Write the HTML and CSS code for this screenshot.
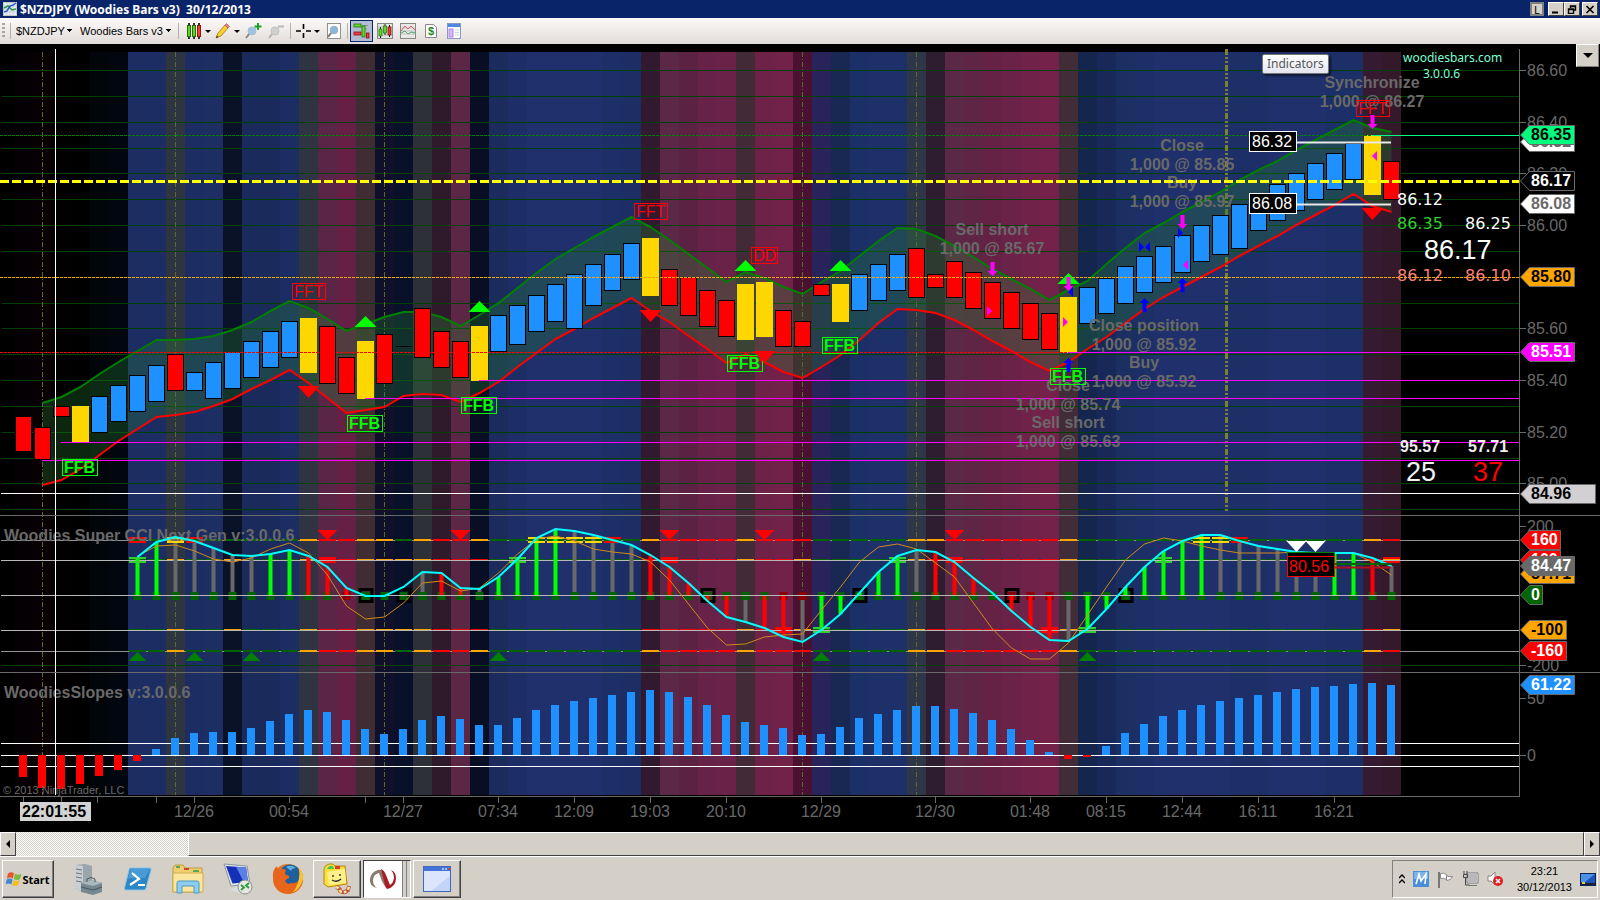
FILE: index.html
```html
<!DOCTYPE html>
<html lang="en">
<head>
    <meta charset="utf-8">
    <title>$NZDJPY (Woodies Bars v3) 30/12/2013</title>
    <link rel="stylesheet" href="styles.css">
</head>
<body>
    <header class="titlebar">
        <svg class="app-icon" width="14" height="14" viewBox="0 0 14 14">
            <rect x="0.5" y="0.5" width="13" height="13" fill="#e8eef8" stroke="#c8c8c8"/>
            <path d="M1 4h12M1 7h12M1 10h12M4 1v12M7 1v12M10 1v12" stroke="#b8c4d8" stroke-width="0.6"/>
            <path d="M1 6l4-2 4 4 4-1" fill="none" stroke="#2a9a3a" stroke-width="1.5"/>
            <path d="M1 10l3-1 3-5 3-1 3-2" fill="none" stroke="#2858c8" stroke-width="1.5"/>
        </svg>
        <h1>$NZDJPY (Woodies Bars v3)&nbsp; 30/12/2013</h1>
        <div class="window-buttons">
            <button class="link-btn" aria-label="Link">L</button>
            <button aria-label="Minimize"><svg width="10" height="9" viewBox="0 0 10 9"><path d="M1 7.5h6" stroke="#000" stroke-width="2"/></svg></button>
            <button aria-label="Restore"><svg width="10" height="9" viewBox="0 0 10 9"><path d="M3.5 3V1h5v4h-2M3.5 1.500h5M1.500 4h5v4.500h-5zM1.500 4.500h5" fill="none" stroke="#000" stroke-width="1.4"/></svg></button>
            <button class="close-btn" aria-label="Close"><svg width="10" height="9" viewBox="0 0 10 9"><path d="M1.500 1l7 7M8.500 1l-7 7" stroke="#000" stroke-width="1.7"/></svg></button>
        </div>
    </header>

    <nav class="toolbar">
        <span class="grip"></span>
        <span class="sep"></span>
        <select class="pick pick-symbol" aria-label="Instrument"><option>$NZDJPY</option></select>
        <select class="pick pick-period" aria-label="Period"><option>Woodies Bars v3</option></select>
        <span class="sep"></span>
        <button class="tool drop" aria-label="Chart style">
            <svg width="16" height="16" viewBox="0 0 16 16">
                <path d="M3 0v16M8 0v16M13 0v16" stroke="#333" stroke-width="2"/>
                <rect x="1.5" y="2.5" width="3" height="11" fill="#5fd820" stroke="#2a6a10"/>
                <rect x="6.5" y="2.5" width="3" height="11" fill="#5fd820" stroke="#2a6a10"/>
                <rect x="11.5" y="2.5" width="3" height="11" fill="#f04030" stroke="#8a1a10"/>
            </svg>
        </button>
        <button class="tool drop" aria-label="Drawing tools">
            <svg width="16" height="16" viewBox="0 0 16 16">
                <path d="M1 15l2-5 7-8 3 3-7 8z" fill="#f8d030" stroke="#a07810" stroke-width="0.8"/>
                <path d="M10 2l1.500-1.500 3 3L13 5z" fill="#f08090" stroke="#b05060" stroke-width="0.6"/>
                <path d="M1 15l1-2.500L3.500 14z" fill="#333"/>
            </svg>
        </button>
        <button class="tool" aria-label="Zoom in">
            <svg width="17" height="16" viewBox="0 0 17 16">
                <circle cx="7" cy="8" r="4" fill="#9cc4e8" stroke="#b0bcc8"/>
                <path d="M4 11l-3 4" stroke="#8a8a8a" stroke-width="2"/>
                <path d="M13 0v7M9.500 3.500h7" stroke="#18a028" stroke-width="2"/>
            </svg>
        </button>
        <button class="tool" aria-label="Zoom out" disabled>
            <svg width="17" height="16" viewBox="0 0 17 16">
                <circle cx="7" cy="8" r="4" fill="#d0d0d0" stroke="#c0c0c0"/>
                <path d="M4 11l-3 4" stroke="#b4b4b4" stroke-width="2"/>
                <path d="M10 3.500h6" stroke="#b8b8b8" stroke-width="2"/>
            </svg>
        </button>
        <span class="sep"></span>
        <button class="tool drop" aria-label="Cross hair">
            <svg width="15" height="16" viewBox="0 0 15 16"><path d="M7.500 1v5M7.500 10v5M0 8h5M10 8h5" stroke="#000" stroke-width="1.6"/></svg>
        </button>
        <button class="tool" aria-label="Data box">
            <svg width="16" height="16" viewBox="0 0 16 16">
                <rect x="1.5" y="0.5" width="13" height="15" fill="#fff" stroke="#909090"/>
                <circle cx="8" cy="7" r="3.800" fill="#88b8e0" stroke="#a0acb8"/>
                <path d="M5 10l-3 4" stroke="#787878" stroke-width="2"/>
            </svg>
        </button>
        <span class="sep"></span>
        <button class="tool active" aria-label="Chart trader">
            <svg width="17" height="17" viewBox="0 0 17 17">
                <rect x="1" y="1" width="7" height="3" fill="#5fe020" stroke="#207010" stroke-width="0.8"/>
                <rect x="1" y="9" width="7" height="3" fill="#f04040" stroke="#901010" stroke-width="0.8"/>
                <path d="M9 2.500h6M9 6h5M9 10.500h3" stroke="#8890a0"/>
                <rect x="9" y="3" width="3" height="11" fill="#5fe020" stroke="#207010" stroke-width="0.8"/>
                <rect x="13.5" y="10" width="2.5" height="5" fill="#f04040" stroke="#901010" stroke-width="0.8"/>
            </svg>
        </button>
        <button class="tool" aria-label="Data series">
            <svg width="16" height="16" viewBox="0 0 16 16">
                <rect x="0.5" y="0.5" width="15" height="15" fill="#e4e4e4" stroke="#888"/>
                <path d="M1 4h14M1 8h14M1 12h14" stroke="#bbb"/>
                <path d="M3.500 4v11M8 1v11M12.500 2v12" stroke="#222"/>
                <rect x="2" y="6" width="3" height="7" fill="#5fd820" stroke="#207010" stroke-width="0.7"/>
                <rect x="6.5" y="3" width="3" height="7" fill="#5fd820" stroke="#207010" stroke-width="0.7"/>
                <rect x="11" y="4" width="3" height="8" fill="#e04030" stroke="#801010" stroke-width="0.7"/>
            </svg>
        </button>
        <button class="tool" aria-label="Indicators">
            <svg width="16" height="16" viewBox="0 0 16 16">
                <rect x="0.5" y="0.5" width="15" height="15" fill="#e8e8e8" stroke="#888"/>
                <path d="M1 5h14M1 8h14M1 11h14" stroke="#c4c4c4"/>
                <path d="M1 8l4-5 3 3 3-3 4 4" fill="none" stroke="#d86060"/>
                <path d="M1 10l4-2 3 3 3-2 4 1" fill="none" stroke="#50a870"/>
            </svg>
        </button>
        <button class="tool" aria-label="Strategies">
            <svg width="16" height="16" viewBox="0 0 16 16">
                <path d="M2.500 1.500h8l3 3v10h-11z" fill="#fff" stroke="#888"/>
                <text x="5" y="12" class="dollar">$</text>
            </svg>
        </button>
        <button class="tool" aria-label="Properties">
            <svg width="14" height="16" viewBox="0 0 14 16">
                <rect x="0.5" y="0.5" width="13" height="15" fill="#fff" stroke="#8898c0"/>
                <rect x="1" y="1" width="12" height="3" fill="#5088e0"/>
                <rect x="2" y="6" width="4" height="8" fill="#d8b8f8" stroke="#a070e0" stroke-width="0.8"/>
                <path d="M8 7h4M8 9.500h4M8 12h4" stroke="#c8d4e8"/>
            </svg>
        </button>
    </nav>

    <main class="chart">
        <svg id="chart" viewBox="0 44 1600 788" preserveAspectRatio="xMinYMin meet" role="img" aria-label="$NZDJPY chart"></svg>
        <span class="tooltip">Indicators</span>
        <button class="panel-toggle" aria-label="Show panel"><svg width="10" height="5" viewBox="0 0 10 5"><path d="M0 0h10L5 5z"/></svg></button>
    </main>

    <div class="scrollbar">
        <button aria-label="Scroll left"><svg width="4" height="8" viewBox="0 0 4 8"><path d="M4 0v8L0 4z"/></svg></button>
        <div class="track"><div class="thumb"></div></div>
        <button aria-label="Scroll right"><svg width="4" height="8" viewBox="0 0 4 8"><path d="M0 0v8l4-4z"/></svg></button>
    </div>

    <footer class="taskbar">
        <button class="start">
            <svg width="16" height="16" viewBox="0 0 16 16">
                <path d="M2 2.500c2-1.500 4-1.500 6-.2L6.800 7.500c-2-1.300-4-1.200-6 .2z" fill="#e8552c"/>
                <path d="M9 2.800c2 1.200 4 1.200 6.500 0L14 8c-2 1.200-4 1.200-6.200 0z" fill="#7db93a"/>
                <path d="M.6 8.700c2-1.400 4-1.500 6-.2L5.400 13.500c-2-1.300-4-1.200-6 .2z" fill="#3f86d8"/>
                <path d="M7.500 9c2 1.300 4 1.200 6.200 0l-1.300 5c-2 1.200-4 1.200-6.200 0z" fill="#f6bd22"/>
            </svg>
            Start
        </button>
        <div class="launch">
            <button aria-label="Server Manager">
                <svg width="30" height="32" viewBox="0 0 30 32">
                    <path d="M2 2l10-1 7 2v23l-9 3-8-4z" fill="#9aa6ac"/>
                    <path d="M2 2l8 1v26l-8-4z" fill="#c8d0d4"/>
                    <path d="M3 6l6 1M3 10l6 1M3 14l6 1M3 18l6 1" stroke="#6a767c"/>
                    <path d="M8 20l10-3 11 3v9l-9 3-12-3z" fill="#768790"/>
                    <path d="M8 20l10-3 11 3-9 3z" fill="#a8b8c0"/>
                    <path d="M14 19v-3q4-3 8 0v3M8 24l12 3 9-3" fill="none" stroke="#48565e"/>
                </svg>
            </button>
            <button aria-label="PowerShell">
                <svg width="28" height="24" viewBox="0 0 28 24">
                    <path d="M6 1h20q1.500 0 1 2l-5 18q-.5 2-2 2H2q-2 0-1.500-2L5 3q.4-2 1-2z" fill="#2f86c4" stroke="#8cc4e8"/>
                    <path d="M7 2h19l-5 9H4z" fill="#5aaae0" opacity="0.6"/>
                    <path d="M8 6l7 6-9 6M14 18h7" fill="none" stroke="#fff" stroke-width="2.2"/>
                </svg>
            </button>
            <button aria-label="Explorer">
                <svg width="32" height="30" viewBox="0 0 32 30">
                    <path d="M1 4l2-3h8l2 3h17v24H1z" fill="#f0cf70" stroke="#c09838"/>
                    <path d="M4 3h4M21 7h6" stroke="#58a858" stroke-width="2"/>
                    <path d="M12 5h5" stroke="#d04030" stroke-width="2"/>
                    <path d="M1 9h30v19H1z" fill="#fae69c" stroke="#d0ac50"/>
                    <path d="M5 29V19q0-2 2-2h18q2 0 2 2v10h-5v-7H10v7z" fill="#8ccdf0" stroke="#4a98c8"/>
                </svg>
            </button>
            <button aria-label="Remote Desktop">
                <svg width="32" height="32" viewBox="0 0 32 32">
                    <path d="M2 1l23 2 3 18-19 2z" fill="#dfe4ea" stroke="#8c949c"/>
                    <path d="M4 3l20 1.500 2 14.500-15.500 1.500z" fill="#1430b8"/>
                    <path d="M14 3.700l10 .8 2 14.500-4 .4z" fill="#5a80e8"/>
                    <path d="M8 27l7-4 8 3-5 4z" fill="#d8dce0"/>
                    <circle cx="23" cy="24" r="7" fill="#e4e8e4" stroke="#889088"/>
                    <path d="M19 22l3 2.500-3 2.500M27 20l-3 2.500 3 2.500" fill="none" stroke="#2a9a3a" stroke-width="1.8"/>
                </svg>
            </button>
            <button aria-label="Firefox">
                <svg width="32" height="32" viewBox="0 0 32 32">
                    <circle cx="16" cy="16" r="15" fill="#e8701c"/>
                    <circle cx="18" cy="12" r="10.500" fill="#1f5f9c"/>
                    <path d="M14 4q5-3 10 1-4 0-5 3z" fill="#58b0e0"/>
                    <path d="M1 15Q0 7 5 3q0 3 3 4 3-2 6 0-2 3 0 5 4 0 3 3-3 1-4 3 2 4 6 2 5 1 8-3 2-6-1-12 6 4 5 12-2 13-15 14Q2 30 1 15z" fill="#e8661c"/>
                    <path d="M27 5q6 6 3 14-3 8-9 10 8-10 6-24z" fill="#fbc62c"/>
                </svg>
            </button>
        </div>
        <div class="tasks">
            <button class="task" aria-label="Folder buddy">
                <svg width="30" height="32" viewBox="0 0 30 32">
                    <path d="M2 6q1-4 5-5h4l2 2h10l2 18-19 3-4-3z" fill="#fbe03c" stroke="#b88410"/>
                    <path d="M5 6q2-4 6-3l1 3z" fill="#48c848"/>
                    <path d="M13 3h5v3h-5z" fill="#e03828"/>
                    <path d="M5 9l18-3 1 14-17 2z" fill="#fdf08c"/>
                    <path d="M11 12v2M18 11v2M10 17q5 3 9-1" fill="none" stroke="#222" stroke-width="1.3"/>
                    <path d="M14 24q4 1 4 4 4 3 8-1l1-4" fill="none" stroke="#c05040" stroke-width="4"/>
                    <path d="M14 24q4 1 4 4 4 3 8-1l1-4" fill="none" stroke="#fbe890" stroke-width="2.5" stroke-dasharray="3 2"/>
                </svg>
            </button>
            <button class="task current" aria-label="NinjaTrader">
                <svg width="28" height="22" viewBox="0 0 28 22">
                    <path d="M8 20Q0 18 1 11 2 4 9 2q4-1 5 3l3 15q-5-7-7-15-6 1-6 8 0 4 4 7z" fill="#8a7a70"/>
                    <path d="M12 1q3 1 5 6l4 10q4-3 4-8 0-4-3-7 5 2 5 8 0 9-9 11-2-2-3-8z" fill="#a81c24"/>
                </svg>
            </button>
            <button class="task" aria-label="Window">
                <svg width="28" height="26" viewBox="0 0 28 26">
                    <rect x="0.5" y="0.5" width="27" height="25" fill="#dbe6fc" stroke="#4068c0"/>
                    <rect x="1" y="1" width="26" height="4" fill="#4474d8"/>
                    <path d="M19 3h2M22 3h2" stroke="#c8d8f8" stroke-width="1.5"/>
                    <path d="M25 3h2" stroke="#e04030" stroke-width="1.5"/>
                    <path d="M27 10v15H8z" fill="#b0c8f4" opacity="0.6"/>
                </svg>
            </button>
        </div>
        <div class="tray">
            <svg width="6" height="10" viewBox="0 0 6 10"><path d="M0 4l3-3 3 3M0 9l3-3 3 3" fill="none" stroke="#000" stroke-width="1.4"/></svg>
            <svg width="16" height="16" viewBox="0 0 16 16"><rect width="16" height="16" fill="#4a90d8"/><rect x="1" y="1" width="14" height="7" fill="#7cb4e8"/><path d="M3 13L6 3l2 7 5-7-1 10" fill="none" stroke="#fff" stroke-width="1.6"/></svg>
            <svg width="17" height="17" viewBox="0 0 17 17"><path d="M2 1v16" stroke="#777" stroke-width="2"/><path d="M3.500 2.500q3-1 6 1v5q-3-2-6-1zM9.500 4.500q2 2 6 1-1 4-6 4z" fill="#fff" stroke="#888"/></svg>
            <svg width="17" height="16" viewBox="0 0 17 16"><rect x="5.5" y="2.5" width="10" height="9" fill="#b8b8bc" stroke="#fff"/><path d="M5 2h11v10H5zM7 14.500h8" fill="none" stroke="#777"/><path d="M2 0v3M5 0v3M1.500 3.500h4v3h-4zM3.500 7v7h4" fill="none" stroke="#444"/></svg>
            <svg width="17" height="16" viewBox="0 0 17 16"><path d="M1 5h3l4-4v13l-4-4H1z" fill="#fff" stroke="#888"/><circle cx="11" cy="10" r="5" fill="#e02020"/><path d="M9 8l4 4M13 8l-4 4" stroke="#fff" stroke-width="1.5"/></svg>
            <time class="clock" datetime="2013-12-30T23:21">23:21<br>30/12/2013</time>
            <svg width="16" height="13" viewBox="0 0 16 13"><rect x="0.5" y="0.5" width="15" height="12" fill="#1c54b8" stroke="#0c2458"/><path d="M1 1h14L5 9H1z" fill="#4c90e8"/><path d="M0 11h16" stroke="#182038" stroke-width="2"/><path d="M2 9h3v2H2z" fill="#e8c838"/></svg>
        </div>
    </footer>

    <script src="chart.js"></script>
</body>
</html>
```
FILE: styles.css
```css
* {
    box-sizing: border-box;
}
body {
    margin: 0;
    min-width: 900px;
    height: 100vh;
    display: flex;
    flex-direction: column;
    overflow: hidden;
    background: #000;
    color: #000;
    font-family: "Noto Sans", sans-serif;
    font-size: 11px;
}
button {
    margin: 0;
    padding: 0;
    border: 0;
    background: none;
    color: inherit;
    font: inherit;
    display: flex;
    align-items: center;
    justify-content: center;
}

/* title bar */
.titlebar {
    flex: none;
    height: 18px;
    padding: 0 2px 0 3px;
    display: flex;
    align-items: center;
    gap: 3px;
    background: #0a246a;
    color: #fff;
}
.titlebar h1 {
    margin: 0;
    font-size: 12px;
    font-weight: bold;
}
.window-buttons {
    margin-left: auto;
    display: flex;
}
.window-buttons button {
    width: 16px;
    height: 14px;
    background: #d4d0c8;
    color: #000;
    border: 1px solid;
    border-color: #fff #404040 #404040 #fff;
}
.window-buttons .link-btn {
    width: 14px;
    margin-right: 4px;
    border: 2px solid #808080;
}
.window-buttons .close-btn {
    margin-left: 2px;
}

/* toolbar */
.toolbar {
    flex: none;
    height: 26px;
    padding-left: 2px;
    display: flex;
    align-items: center;
    background: linear-gradient(#fcfafa, #e2dcd8);
}
.grip {
    width: 3px;
    height: 16px;
    background: repeating-linear-gradient(#a8a4a0 0 2px, transparent 2px 4px);
}
.sep {
    width: 1px;
    height: 16px;
    margin: 0 5px;
    background: #b4b0ac;
}
.tool + .sep {
    margin: 0 2px;
}
.pick {
    appearance: none;
    height: 20px;
    margin: 0;
    padding: 0;
    border: 0;
    background: linear-gradient(#000, #000) no-repeat right 4px top 10px / 1px 1px,
        linear-gradient(#000, #000) no-repeat right 3px top 9px / 3px 1px,
        linear-gradient(#000, #000) no-repeat right 2px top 8px / 5px 1px;
    font: 11px "Liberation Sans", Arial, sans-serif;
    color: #000;
}
.pick-symbol {
    width: 58px;
    margin-right: 6px;
}
.pick-period {
    width: 93px;
}
.tool {
    width: 23px;
    height: 22px;
    flex: none;
}
.tool.drop {
    width: 29px;
    gap: 3px;
}
.tool.drop::after {
    content: "";
    border: 3px solid transparent;
    border-top-color: #000;
    border-bottom: 0;
}
.tool.active {
    background: #b4bcd4;
    border: 1px solid #0a246a;
}
.dollar {
    font: bold 11px "Liberation Sans", sans-serif;
    fill: #1c8a1c;
}

/* chart */
.chart {
    flex: 1;
    min-height: 0;
    position: relative;
    background: #000;
}
#chart {
    display: block;
    width: 100%;
    height: 100%;
}
#chart text {
    font-family: "Liberation Sans", Arial, sans-serif;
    font-size: 16px;
    fill: #696969;
}
#chart .small {
    font-size: 11px;
}
#chart .wide {
    font-family: "DejaVu Sans", sans-serif;
}
#chart .note {
    font-family: "Noto Sans", sans-serif;
    font-size: 12px;
}
#chart .big {
    font-size: 27px;
}
#chart .bold {
    font-weight: bold;
}
.tooltip {
    position: absolute;
    left: 1262px;
    top: 10px;
    padding: 0 4px;
    border: 1px solid #767676;
    border-radius: 2px;
    background: linear-gradient(#fff, #e4e5f0);
    box-shadow: 2px 2px 2px rgba(0, 0, 0, 0.5);
    color: #575757;
    font-size: 12px;
    line-height: 18px;
}
.panel-toggle {
    position: absolute;
    right: 1px;
    top: 0;
    width: 23px;
    height: 23px;
    background: #d4d0c8;
    border: 1px solid;
    border-color: #fff #808080 #808080 #fff;
}

/* scroll bar */
.scrollbar {
    flex: none;
    height: 24px;
    display: flex;
    background: #d4d0c8;
}
.scrollbar button {
    flex: none;
    width: 16px;
    border: 1px solid;
    border-color: #fff #404040 #404040 #fff;
}
.track {
    flex: 1;
    display: flex;
    justify-content: flex-end;
    background: repeating-conic-gradient(#fff 0 25%, #d4d0c8 0 50%) 0 0 / 2px 2px;
}
.thumb {
    width: 89%;
    background: #d4d0c8;
    border: 1px solid;
    border-color: #fff #404040 #404040 #fff;
}

/* task bar */
.taskbar {
    flex: none;
    height: 44px;
    padding: 3px 2px 2px;
    display: flex;
    align-items: stretch;
    background: #d4d0c8;
    border-top: 1px solid #fff;
}
.start,
.task {
    background: #d4d0c8;
    border: 1px solid;
    border-color: #fff #404040 #404040 #fff;
    box-shadow: inset -1px -1px #808080;
}
.start {
    width: 52px;
    font: bold 11px "Noto Sans", sans-serif;
}
.launch {
    margin-left: 9px;
    display: flex;
}
.launch button {
    width: 50px;
}
.tasks {
    display: flex;
    gap: 2px;
}
.task {
    width: 48px;
}
.task.current {
    width: 48px;
    padding-right: 8px;
    background: linear-gradient(90deg, #fff 38px, #808080 38px 39px, #d4d0c8 39px 42px, #808080 42px 43px, #d4d0c8 43px);
    border-color: #404040 #fff #fff #404040;
    box-shadow: none;
}
.tray {
    margin-left: auto;
    padding: 0 1px 0 6px;
    display: flex;
    align-items: center;
    gap: 8px;
    border: 1px solid;
    border-color: #808080 #fff #fff #808080;
}
.clock {
    margin-left: 5px;
    font: 11px/16px "Liberation Sans", Arial, sans-serif;
    text-align: center;
}
```
FILE: chart.js
```js
const STEP = 19;
const FIRST = 23.5;
const RIGHT = 1519.5;
const BLUE = '#1e90ff', RED = '#ff0000', GOLD = '#ffd700', LIME = '#00ff00', GREY = '#696969';
const MAGENTA = '#ff00ff', ORANGE = '#ffa500', GREEN = '#006400';

const svg = document.getElementById('chart');
const cx = i => FIRST + i * STEP;

function add(tag, attrs, text) {
    const el = document.createElementNS('http://www.w3.org/2000/svg', tag);
    for (const key in attrs) el.setAttribute(key, attrs[key]);
    if (text !== undefined) el.textContent = text;
    svg.appendChild(el);
    return el;
}
function rect(x, y, width, height, fill, extra) {
    return add('rect', Object.assign({ x, y, width, height, fill }, extra));
}
function line(x1, y1, x2, y2, stroke, width = 1, dash) {
    const attrs = { x1, y1, x2, y2, stroke, 'stroke-width': width };
    if (dash) attrs['stroke-dasharray'] = dash;
    return add('line', attrs);
}
function poly(points, fill) {
    return add('polygon', { points, fill });
}
function label(x, y, text, fill, cls = '', anchor = 'start') {
    const el = add('text', { x, y, class: cls, 'text-anchor': anchor }, text);
    if (fill) el.style.fill = fill;
    return el;
}
function curve(values, start, stroke, width) {
    add('polyline', {
        points: values.map((y, i) => `${cx(i + start)},${y}`).join(' '),
        fill: 'none', stroke, 'stroke-width': width
    });
}

// background colour of each bar
const bands = ('050003 080003 020001 000000 02050a 02060f 1b2d63 1b2d63 2e3440 1b2d63 1c2e62 0a1228 1a2a5a 1a2a5a 1b2d63 ' +
    '2f3342 5a2648 661f45 3f2d33 10102a 08102a 2e3038 2e1a2a 5c2645 080f24 1b2b5c 1d2d66 1f306c 1f306c 1f306c 1f306c ' +
    '1c2f66 1c2e64 311a30 5c2848 5c2244 662248 6a2248 422a36 6e2248 722249 4a1230 28235a 182852 1c3068 1d3068 1d3068 ' +
    '2f3648 2e1c30 5c2848 5e2545 652245 6a2248 702249 742249 412c38 14264e 182858 1c2f62 1c2f66 1f306c 1f306c 1f306c ' +
    '1f306c 1c2f66 1c2f66 1f306c 1f306c 1f306c 1c2f66 1c2f66 351a32 33192a').split(' ');
bands.forEach((c, i) => rect(cx(i) - 9.5, 52, STEP, 743, '#' + c, { 'shape-rendering': 'crispEdges' }));

// price grid
[70, 96, 122, 148, 173, 199, 225, 251, 277, 303, 328, 354, 380, 406, 432, 458, 483, 509, 665]
    .forEach(y => line(2, y + 0.5, RIGHT, y + 0.5, '#004000'));

// session breaks
[42.5, 175.5, 384.5, 802.5, 916.5].forEach(x => line(x, 52, x, 795, '#556b2f', 1, '5 2 1 2'));
line(1226.5, 49, 1226.5, 511, '#7c8230', 3, '6 2 2 2 2 2');

// band around the bars
const upper = [403, 397, 387, 374, 362, 351, 340, 340, 339, 336, 330, 322, 311, 301, 308, 319, 331, 324, 317, 312, 312, 317, 326,
    315, 303, 288, 273, 259, 248, 237, 227, 217, 227, 240, 254, 268, 282, 272, 278, 287, 294, 282, 271, 256, 241, 228, 229, 236,
    246, 257, 269, 279, 289, 300, 290, 281, 264, 248, 233, 223, 212, 202, 192, 180, 170, 161, 150, 140, 130, 120, 128, 132];
const lower = [485, 480, 469, 455, 441, 429, 417, 415, 412, 406, 399, 389, 380, 370, 383, 398, 413, 410, 407, 396, 394, 395, 402,
    393, 382, 367, 353, 339, 329, 318, 308, 298, 311, 322, 336, 349, 363, 354, 362, 372, 378, 367, 355, 340, 323, 309, 310, 313,
    320, 330, 341, 351, 362, 371, 362, 349, 337, 323, 309, 297, 287, 277, 267, 256, 246, 236, 225, 215, 205, 194, 206, 212];
const edge = upper.map((y, i) => `${cx(i + 1)},${y}`)
    .concat(lower.map((y, i) => `${cx(i + 1)},${y}`).reverse());
poly(edge.join(' '), 'rgba(40, 130, 50, 0.3)');
curve(upper, 1, '#008000', 2);
curve(lower, 1, RED, 2);

// price bars: type, top, bottom
const bars = `R416-452 R427-460 R406-417 Y406-442 B396-433 B385-422 B375-412 B365-402 R354-391 B372-391 B362-399 B352-389
    B341-378 B331-368 B321-358 Y318-373 R326-384 R357-394 Y341-399 R334-384 D346-347 R308-358 R331-368 R341-378 Y326-381
    B315-352 B305-345 B295-332 B284-322 B274-329 B264-306 B254-291 B243-280 Y238-296 R269-306 R277-316 R290-327 R300-337
    Y284-340 Y282-337 R310-347 R321-347 R284-296 Y284-322 B274-311 B264-301 B254-291 R248-298 R274-288 R261-298 R272-309
    R282-319 R292-329 R303-340 R313-350 Y297-353 B287-324 B278-314 B266-304 B256-293 B246-283 B235-273 B225-262 B215-255
    B204-249 B194-231 B184-221 B173-211 B163-200 B153-190 B143-180 Y135-195 R161-200`.split(/\s+/);
bars.forEach((bar, i) => {
    const [top, bottom] = bar.slice(1).split('-').map(Number);
    if (bar[0] === 'D') {
        line(cx(i) - 8, top + 0.5, cx(i) + 8, top + 0.5, '#000');
    } else if (bar[0] === 'Y') {
        rect(cx(i) - 8.5, top, 17, bottom - top, GOLD);
    } else {
        rect(cx(i) - 8, top + 0.5, 16, bottom - top - 1, bar[0] === 'B' ? BLUE : RED, { stroke: '#000' });
    }
});

// price levels
line(0, 277.5, RIGHT, 277.5, ORANGE, 1, '3 1');
line(0, 352.5, 1068, 352.5, RED, 1, '3 1');
line(0, 135.5, 1372, 135.5, '#008000', 1, '3 1');
line(1372, 135.5, RIGHT, 135.5, '#00ff7f');
[[1068, 352.5], [479, 380.5], [365, 398.5], [61, 442.5], [42, 460.5]].forEach(([x, y]) => line(x, y, RIGHT, y, MAGENTA));
line(1, 493.5, RIGHT, 493.5, '#fff');

// order captions
[[992, 235, 'Sell short'], [1182, 151, 'Close'], [1182, 188, 'Buy'], [1144, 331, 'Close position'], [1144, 368, 'Buy'],
    [1068, 391, 'Close'], [1068, 428, 'Sell short'], [1372, 88, 'Synchronize'],
    [992, 254, '1,000 @ 85.67'], [1182, 170, '1,000 @ 85.85'], [1182, 207, '1,000 @ 85.97'], [1144, 350, '1,000 @ 85.92'],
    [1144, 387, '1,000 @ 85.92'], [1068, 410, '1,000 @ 85.74'], [1068, 447, '1,000 @ 85.63'], [1372, 107, '1,000 @ 86.27']
].forEach(([x, y, t]) => label(x, y, t, GREY, 'bold', 'middle'));

// pattern tags
[[292, 283, 'FFT'], [634, 203, 'FFT'], [751, 247, 'DD'], [1356, 100, 'FFT'], [62, 459, 'FFB'], [347, 415, 'FFB'],
    [461, 397, 'FFB'], [727, 355, 'FFB'], [822, 337, 'FFB'], [1050, 368, 'FFB']
].forEach(([x, y, t]) => {
    const color = t === 'FFB' ? LIME : RED;
    const width = { FFT: 33, FFB: 35, DD: 26 }[t];
    rect(x + 0.5, y + 0.5, width, 16, 'none', { stroke: color });
    label(x + 2, y + 14, t, color, t === 'FFB' ? 'bold' : '');
});

// up and down triangles
[[18, 316], [24, 301], [38, 260], [43, 260], [55, 273]].forEach(([i, y]) =>
    poly(`${cx(i)},${y} ${cx(i) + 11},${y + 11} ${cx(i) - 11},${y + 11}`, LIME));
[[15, 386], [33, 310], [39, 351], [71, 208]].forEach(([i, y]) =>
    poly(`${cx(i)},${y + 12} ${cx(i) + 11},${y} ${cx(i) - 11},${y}`, RED));

// order arrows
function arrow(x, tip, dir, fill) {
    const b = tip - dir * 5, e = tip - dir * 14;
    poly(`${x},${tip} ${x + 5},${b} ${x + 2},${b} ${x + 2},${e} ${x - 2},${e} ${x - 2},${b} ${x - 5},${b}`, fill);
}
[[51, 276], [55, 291], [61, 229], [71, 129]].forEach(([i, y]) => arrow(cx(i), y, 1, MAGENTA));
[[55, 358], [59, 298], [61, 278]].forEach(([i, y]) => arrow(cx(i), y, -1, '#0000ff'));
function fill(x, y, dir, color) {
    poly(`${x},${y - 5} ${x + dir * 5},${y} ${x},${y + 5}`, color);
}
fill(987, 311, 1, MAGENTA);
fill(1063, 322, 1, MAGENTA);
fill(1188, 265, -1, MAGENTA);
fill(1377, 156, -1, MAGENTA);
fill(1139, 247, 1, '#0000ff');
fill(1150, 247, -1, '#0000ff');
fill(1178, 233, 1, '#0000ff');
fill(1073, 292, -1, '#0000ff');

line(0, 181.5, RIGHT, 181.5, '#ffff00', 3, '9 3');
[[142, '86.32'], [204, '86.08']].forEach(([y, t]) => {
    line(1297, y + 0.5, 1391, y + 0.5, '#e8e8e8', 2);
    rect(1249.5, y - 10.5, 47, 20, '#000', { stroke: '#fff' });
    label(1252, y + 5, t, '#fff');
});

// CCI panel
[540.5, 560.5, 595.5, 630.5, 651.5].forEach((y, i) => line(1, y, RIGHT, y, i % 4 ? '#b8b8b8' : '#909090'));
const outer = 'GGOGGGGGGORROOGORROGGGGGGGGORRRRORRRGGGGGOORRRRRROGGGGGGGGGGGGGGGOR';
const inner = 'GGOGGOGGGORROOOORRRGGGGGGGGRRRRRORROGGGGGORRRRRRROGGGGGGGGGGGGGGGRO';
const zone = { G: GREEN, O: ORANGE, R: RED };
for (let i = 6; i < 73; i++) {
    const x = cx(i) - 8.5;
    rect(x, 539, 17, 2, zone[outer[i - 6]]);
    rect(x, 650, 17, 2, zone[outer[i - 6]]);
    rect(x, 559, 17, 1, zone[inner[i - 6]]);
    rect(x, 629, 17, 1, zone[inner[i - 6]]);
}

const cci = [557, 542, 537, 541, 548, 555, 556, 554, 550, 556, 567, 588, 596, 596, 587, 572, 573, 588, 589, 577, 559, 538, 529,
    531, 535, 540, 545, 555, 567, 583, 601, 617, 622, 628, 637, 642, 630, 614, 593, 572, 556, 550, 552, 562, 578, 593, 611, 627,
    640, 641, 629, 609, 587, 567, 551, 541, 535, 535, 541, 546, 549, 552, 553, 553, 553, 558, 566];
const turbo = [556, 546, 545, 551, 559, 562, 558, 549, 543, 553, 575, 606, 619, 617, 603, 583, 581, 591, 588, 573, 554, 539, 536,
    541, 549, 552, 554, 562, 580, 604, 628, 645, 644, 637, 635, 634, 610, 587, 562, 547, 544, 549, 563, 577, 603, 629, 648, 659,
    659, 643, 615, 587, 560, 544, 538, 541, 546, 550, 553, 553, 553, 552, 553, 553, 553, 562, 575];
const hist = 'LLSSSSSLLRRR---SRRSLLLLSSSSRRRRRSRRSLLLLLSRRR-RRRSLLLLLLLSSSSSSLLRS';
[18, 20, 36, 44, 52, 58].forEach(i => rect(cx(i) - 5.5, 589.5, 12, 12, 'none', { stroke: '#000', 'stroke-width': 3 }));
cci.forEach((y, n) => {
    const i = n + 6;
    rect(cx(i) - 4, 592, 8, 8, [17, 40, 41, 52, 53, 54].includes(i) ? '#8b0000' : GREEN);
    if (hist[n] !== '-') {
        const end = hist[n] === 'S' ? (y < 595 ? 592 : 600) : 595;
        rect(cx(i) - 2, Math.min(y, end), 4, Math.abs(end - y), { L: LIME, R: RED, S: GREY }[hist[n]]);
    }
});
line(1, 595.5, RIGHT, 595.5, '#b8b8b8');

// level crossings
[[6, 540, RED], [8, 540, GOLD], [9, 540, RED], [6, 560, '#32cd32'], [16, 560, RED], [26, 560, '#32cd32'], [27, 540, GOLD],
    [28, 540, GOLD], [29, 540, GOLD], [30, 540, GOLD], [31, 540, RED], [34, 560, RED], [40, 630, RED], [42, 630, '#32cd32'],
    [46, 560, '#32cd32'], [49, 560, RED], [54, 630, RED], [56, 630, '#32cd32'], [60, 560, '#32cd32'], [62, 540, GOLD],
    [63, 540, GOLD], [64, 540, RED], [72, 560, RED]
].forEach(([i, y, c]) => {
    rect(cx(i) - 8.5, y - 3, 17, 2, c);
    rect(cx(i) - 8.5, y + 1, 17, 2, c);
});
label(4, 541, 'Woodies Super CCI Next Gen v:3.0.0.6', GREY, 'bold');
curve(turbo, 6, '#d08a1c', 1);
curve(cci, 6, '#00ffff', 2);
[16, 23, 34, 39, 49].forEach(i => poly(`${cx(i) - 10},530 ${cx(i) + 10},530 ${cx(i)},540`, RED));
[6, 9, 12, 25, 42, 56].forEach(i => poly(`${cx(i) - 9},661 ${cx(i) + 9},661 ${cx(i)},652`, '#008000'));
[67, 68].forEach(i => poly(`${cx(i) - 10},541 ${cx(i) + 10},541 ${cx(i)},552`, '#fff'));
line(1335, 564, 1391, 564, GREEN, 2);
line(1335, 567.5, 1391, 567.5, '#b01020', 2);
rect(1287.5, 552.5, 47, 20, '#000', { stroke: '#008000' });
rect(1287.5, 556.5, 47, 20, '#000', { stroke: RED });
label(1289, 572, '80.56', RED);

// slopes panel
[743.5, 755.5, 766.5].forEach(y => line(1, y, RIGHT, y, '#fff'));
[777, 788, 789, 784, 776, 770, 761, 749, 738, 733, 732, 732, 728, 721, 714, 710, 712, 720, 729, 734, 729, 720, 716, 719, 725,
    725, 718, 710, 705, 701, 698, 695, 692, 690, 692, 697, 705, 715, 722, 725, 728, 735, 734, 727, 718, 714, 710, 706, 706, 709,
    713, 720, 729, 740, 752, 759, 757, 746, 733, 724, 716, 710, 705, 701, 698, 695, 692, 689, 687, 686, 684, 683, 685
].forEach((y, i) => rect(cx(i) - 4.5, Math.min(y, 755), 8, Math.abs(y - 755), y > 755 ? RED : BLUE));
label(4, 698, 'WoodiesSlopes v:3.0.0.6', GREY, 'bold');
label(3, 794, '© 2013 NinjaTrader, LLC', GREY, 'small');

// cross hair, frame and axes
line(55.5, 49, 55.5, 795, '#fff');
line(0, 515.5, 1600, 515.5, GREY);
line(0, 672.5, 1600, 672.5, GREY);
line(0, 796.5, 1520, 796.5, GREY);
line(RIGHT, 49, RIGHT, 797, GREY);
[23, 61, 97, 156, 365].forEach(x => line(x + 0.5, 797, x + 0.5, 803, GREY));
[[194, '12/26'], [289, '00:54'], [403, '12/27'], [498, '07:34'], [574, '12:09'], [650, '19:03'], [726, '20:10'],
    [821, '12/29'], [935, '12/30'], [1030, '01:48'], [1106, '08:15'], [1182, '12:44'], [1258, '16:11'], [1334, '16:21']
].forEach(([x, t]) => {
    line(x + 0.5, 797, x + 0.5, 803, GREY);
    label(x, 817, t, GREY, '', 'middle');
});
rect(20, 802, 71, 19, '#d3d3d3');
label(22, 817, '22:01:55', '#000', 'bold');
[[70, '86.60'], [122, '86.40'], [173, '86.20'], [225, '86.00'], [328, '85.60'], [380, '85.40'], [432, '85.20'],
    [483, '85.00'], [526, '200'], [665, '-200'], [698, '50'], [755, '0']
].forEach(([y, t]) => {
    line(1519, y + 0.5, 1526, y + 0.5, GREY);
    label(1527, y + 6, t, GREY);
});

// value markers on the price axis
[[142, '86.32', '#fff', GREY, 1574], [135, '86.35', '#00ff7f', '#000', 1574], [181, '86.17', '#000', '#fff', 1574],
    [204, '86.08', '#fff', GREY, 1574], [277, '85.80', ORANGE, '#000', 1574], [352, '85.51', MAGENTA, '#fff', 1574],
    [494, '84.96', '#d3d0d3', '#000', 1595], [540, '160', RED, '#fff', 1560], [560, '100', RED, '#fff', 1560],
    [574, '57.71', ORANGE, '#000', 1574], [566, '84.47', GREY, '#fff', 1574], [595, '0', GREEN, '#fff', 1542],
    [630, '-100', ORANGE, '#000', 1566], [651, '-160', RED, '#fff', 1566], [685, '61.22', BLUE, '#fff', 1574]
].forEach(([y, t, bg, fg, right]) => {
    const el = poly(`1520.5,${y} 1529.5,${y - 9.5} ${right + 0.5},${y - 9.5} ${right + 0.5},${y + 9.5} 1529.5,${y + 9.5}`, bg);
    el.setAttribute('stroke', GREY);
    label(1531, y + 5, t, fg, 'bold');
});

// read-outs right of the last bar
label(1403, 62, 'woodiesbars.com', '#7fffd4', 'note');
label(1423, 78, '3.0.0.6', '#7fffd4', 'note');
label(1397, 205, '86.12', '#fff', 'wide');
label(1397, 229, '86.35', '#32cd32', 'wide');
label(1465, 229, '86.25', '#fff', 'wide');
label(1424, 259, '86.17', '#fff', 'big');
label(1397, 281, '86.12', '#fa8072', 'wide');
label(1465, 281, '86.10', '#fa8072', 'wide');
label(1400, 452, '95.57', '#f0f0f0', 'bold');
label(1468, 452, '57.71', '#f0f0f0', 'bold');
label(1406, 481, '25', '#f0f0f0', 'big');
label(1473, 481, '37', RED, 'big');
```
